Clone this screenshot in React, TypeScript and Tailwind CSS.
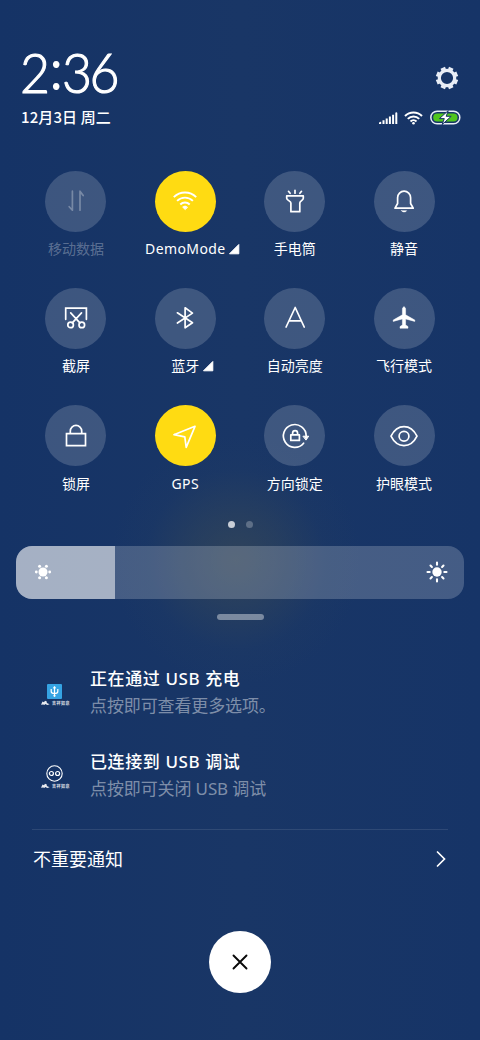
import React from 'react';

type Tile = {
  label: string;
  icon: React.ReactNode;
  active?: boolean;
  disabled?: boolean;
  expandable?: boolean;
};

const Icon = ({ children }: { children: React.ReactNode }) => (
  <svg
    width="30"
    height="30"
    viewBox="0 0 30 30"
    fill="none"
    stroke="currentColor"
    strokeWidth="1.7"
    strokeLinecap="round"
    strokeLinejoin="round"
  >
    {children}
  </svg>
);

const TILES: Tile[] = [
  {
    label: '移动数据',
    disabled: true,
    icon: (
      <Icon>
        <path d="M11.4 5.2v19l-3.2-3.5M19 24.2v-19l3.2 4.4" />
      </Icon>
    ),
  },
  {
    label: 'DemoMode',
    active: true,
    expandable: true,
    icon: (
      <Icon>
        <g strokeWidth="1.9" strokeLinecap="butt">
          <path d="M3.8 11.2a15.8 15.8 0 0 1 22.4 0M7.1 14.9a11.2 11.2 0 0 1 15.8 0M10.3 18.5a6.7 6.7 0 0 1 9.4 0" />
        </g>
        <path d="M15 23.4l-2.4-2.3a3.4 3.4 0 0 1 4.8 0z" fill="currentColor" strokeWidth="0.8" />
      </Icon>
    ),
  },
  {
    label: '手电筒',
    icon: (
      <Icon>
        <path d="M6.7 9.9h16.6v2.4c0 2-3.5 2.7-3.5 4.8v8.6h-8.9v-8.6c0-2.1-4.2-2.8-4.2-4.8zM15 4.3v2.9M8.5 5.3l1.6 2M21.5 5.3l-1.6 2" />
      </Icon>
    ),
  },
  {
    label: '静音',
    icon: (
      <Icon>
        <path d="M6 22.2h18.2l-2.6-4.7v-5.8a6.5 6.5 0 0 0-13 0v5.8z" />
        <path d="M12.6 24.7h5c-.4.9-1.4 1.2-2.5 1.2s-2.1-.3-2.5-1.2z" fill="currentColor" strokeWidth="0.5" />
      </Icon>
    ),
  },
  {
    label: '截屏',
    icon: (
      <Icon>
        <path d="M4.7 16.3V5.2h20.7v11.1M9.7 9.8l9.2 10M20.5 9.8l-9.2 10" strokeLinejoin="miter" />
        <circle cx="9.6" cy="21.9" r="2.8" />
        <circle cx="20.8" cy="21.9" r="2.8" />
      </Icon>
    ),
  },
  {
    label: '蓝牙',
    expandable: true,
    icon: (
      <Icon>
        <path d="M7.4 9.8l15.1 10-7.4 5V4.8l7.4 5.3L7.4 20" />
      </Icon>
    ),
  },
  {
    label: '自动亮度',
    icon: (
      <Icon>
        <path d="M6.1 24L15.2 4.5 24.2 24M9 17.8h12.4" />
      </Icon>
    ),
  },
  {
    label: '飞行模式',
    icon: (
      <Icon>
        <path
          d="M15 4c1 0 1.600 1 1.600 2.200v5.600l9.200 5.300v1.300l-9.200-2.500v6l2.400 1.700v1.600h-8v-1.600l2.400-1.700v-6l-9.200 2.500v-1.300l9.200-5.300V6.200C13.400 5 14 4 15 4z"
          fill="currentColor"
          strokeWidth="0.5"
        />
      </Icon>
    ),
  },
  {
    label: '锁屏',
    icon: (
      <Icon>
        <path d="M5.5 12.7h19v12h-19zM9.3 12.5v-2.400a5.700 5.700 0 0 1 11.400 0v2.400" strokeLinejoin="miter" />
      </Icon>
    ),
  },
  {
    label: 'GPS',
    active: true,
    icon: (
      <Icon>
        <path d="M25 5.300L3.900 13.700l10.900 2.200 1.400 10.400z" />
      </Icon>
    ),
  },
  {
    label: '方向锁定',
    icon: (
      <Icon>
        <path d="M23.600 22.200a11.400 11.400 0 1 1 2.600-7.200" />
        <path d="M23.300 15.200h5.400l-2.500 3.600z" fill="currentColor" strokeWidth="1" />
        <path d="M10.800 13.900h8.600v5.500h-8.600zM12.600 13.800v-1.600a2.500 2.500 0 0 1 5 0v1.600" />
      </Icon>
    ),
  },
  {
    label: '护眼模式',
    icon: (
      <Icon>
        <path d="M2 15.200c3.100-6.200 7.500-9.500 13-9.500s9.900 3.300 13 9.500c-3.100 6.200-7.500 9.500-13 9.500S5.100 21.400 2 15.200z" />
        <circle cx="15" cy="15.200" r="4.900" />
      </Icon>
    ),
  },
];

const StatusIcons = () => (
  <div className="flex items-center">
    {/* signal */}
    <svg width="19" height="14" viewBox="0 0 19 14" className="mr-1.5 fill-white">
      <path d="M0 13v-1q0-1.300 2.200-1.300V13zM3.500 13V9.300h2V13zM6.700 13V7.500h2V13zM9.900 13V5.600h2V13zM13.100 13V3.800h2V13zM16.300 13V2.200q0-1 1-1t1 1V13z" />
    </svg>
    {/* wifi */}
    <svg width="19" height="14" viewBox="0 0 19 14" className="mr-[7px]" fill="none" stroke="#fff" strokeWidth="2">
      <path d="M1 5a12 12 0 0 1 17 0M3.800 7.900a8 8 0 0 1 11.400 0M6.500 10.500a4.300 4.300 0 0 1 6 0" />
      <circle cx="9.500" cy="12.300" r="1.300" fill="#fff" stroke="none" />
    </svg>
    {/* battery */}
    <svg width="31" height="15" viewBox="0 0 31 15" fill="none">
      <rect x="0.800" y="1.200" width="29" height="12.600" rx="6.300" stroke="#e9eef7" strokeWidth="1.500" />
      <rect x="3.200" y="3.500" width="24.300" height="8" rx="4" fill="#4fc51c" />
      <path d="M18.300 0.600L9.400 8.600h4.900l-2.200 6 9.100-8.300h-5z" fill="#fff" stroke="#163467" strokeWidth="1" />
    </svg>
  </div>
);

const GearIcon = () => (
  <svg width="24" height="24" viewBox="0 0 24 24" fill="none" stroke="#e8edf6">
    <circle cx="12" cy="12" r="7.700" strokeWidth="3.200" />
    <g strokeWidth="4.800">
      <path d="M12 .9v3M12 20.100v3M.9 12h3M20.100 12h3" transform="rotate(22.500 12 12)" />
      <path d="M12 .9v3M12 20.100v3M.9 12h3M20.100 12h3" transform="rotate(67.500 12 12)" />
    </g>
  </svg>
);

const QuickTile = ({ tile }: { tile: Tile }) => (
  <div className="flex h-[117.300px] flex-col items-center">
    <div
      className={`flex size-[61px] shrink-0 items-center justify-center rounded-full ${
        tile.active ? 'bg-[#ffdb12]' : 'bg-white/17'
      } ${tile.disabled ? 'text-white/30' : 'text-white'}`}
    >
      {tile.icon}
    </div>
    <div
      className={`relative mt-[7.500px] h-5 whitespace-nowrap text-sm leading-5 ${
        tile.disabled ? 'text-white/30' : 'text-white'
      } ${tile.active ? 'tracking-[0.400px]' : ''}`}
    >
      {tile.label}
      {tile.expandable && (
        <svg width="11" height="11" viewBox="0 0 11 11" className="absolute top-[5px] left-full ml-[3.500px] fill-white">
          <path d="M9.800.5v9.300H.5z" stroke="#fff" strokeLinejoin="round" />
        </svg>
      )}
    </div>
  </div>
);

const Stamp = () => (
  <div className="mt-px flex h-[7px] items-center">
    <svg width="11" height="6" viewBox="0 0 9 6" className="fill-white/90">
      <path d="M0 4.800L1.500 1.500 3 2.200 4 .8l1.800.8v1.500l2.800 1.200-2.300.8-2-1-1 1-1-.7z" />
    </svg>
    <span className="ml-px whitespace-nowrap font-['Liberation_Serif','Noto_Sans_CJK_SC',serif] text-[4px] font-bold leading-[7px] tracking-[0.500px] text-white/85">
      吉祥如意
    </span>
  </div>
);

type NotificationProps = { icon: React.ReactNode; title: string; text: string };

const Notification = ({ icon, title, text }: NotificationProps) => (
  <div className="flex h-[83px]">
    <div className="flex w-[50px] flex-col items-start">
      <div className="flex h-[34px] w-[29px] items-end justify-center">{icon}</div>
      <Stamp />
    </div>
    <div>
      <div className="h-[27px] text-[17px] font-medium leading-[27px] tracking-[0.600px]">{title}</div>
      <div className="h-[27px] text-[17px] leading-[27px] tracking-[-0.120px] text-white/45">{text}</div>
    </div>
  </div>
);

const App: React.FC = () => {
  const brightness = 22;

  return (
    <div className="flex h-[1040px] w-[480px] flex-col overflow-hidden bg-[#163467] bg-[radial-gradient(circle_at_236px_560px,rgba(62,76,84,0.6)_0px,rgba(58,74,86,0.4)_45px,rgba(40,64,96,0.15)_90px,transparent_125px),linear-gradient(90deg,#153366,#193666_50%,#163467)] font-['Noto_Sans','Noto_Sans_CJK_SC',sans-serif] text-white">
      <header className="flex h-[170.500px] shrink-0 justify-between pt-[45px] pr-[19px] pl-[21px]">
        <div>
          <div className="-mt-[3px] -ml-px flex h-[60px] origin-left scale-x-[0.94] font-['Lato'] text-[55px] font-light leading-[60px] tracking-[-2.500px] [-webkit-text-stroke:1.100px_white]">
            <span>2</span>
            <span className="relative -top-[4px] mr-[2px] ml-[2.500px] [-webkit-text-stroke:1.800px_white]">:</span>
            <span>36</span>
          </div>
          <div className="mt-1 h-[22px] font-['Noto_Sans_CJK_SC',sans-serif] text-[15px] font-medium leading-[22px] tracking-[0.100px]">
            12月3日 周二
          </div>
        </div>
        <div className="flex flex-col items-end pt-[21px]">
          <div className="mr-0.5">
            <GearIcon />
          </div>
          <div className="mt-5">
            <StatusIcons />
          </div>
        </div>
      </header>

      <div className="mx-[21.300px] grid shrink-0 grid-cols-4">
        {TILES.map((tile) => (
          <QuickTile key={tile.label} tile={tile} />
        ))}
      </div>

      {/* Page dots */}
      <div className="-mt-[1.400px] flex h-[24.500px] shrink-0 justify-center gap-[11px]">
        <span className="size-[7px] rounded-full bg-white/75" />
        <span className="size-[7px] rounded-full bg-white/25" />
      </div>

      {/* Brightness */}
      <div className="relative mx-4 h-[53.500px] shrink-0 overflow-hidden rounded-2xl bg-white/20">
        <div className="h-full bg-white/52" style={{ width: `${brightness}%` }} />
        <div className="absolute inset-0 flex items-center justify-between pr-4 pl-[17.500px]">
          <svg width="18" height="18" viewBox="0 0 18 18" className="fill-white">
            <circle cx="9" cy="9" r="4.500" />
            <circle cx="2.300" cy="9" r="1.400" />
            <circle cx="15.700" cy="9" r="1.400" />
            <circle cx="5.600" cy="3.200" r="1.500" />
            <circle cx="12.400" cy="3.200" r="1.500" />
            <circle cx="5.600" cy="14.800" r="1.500" />
            <circle cx="12.400" cy="14.800" r="1.500" />
          </svg>
          <svg width="22" height="22" viewBox="0 0 22 22" fill="#fff" stroke="#fff" strokeWidth="2.100" strokeLinecap="round">
            <circle cx="11" cy="11" r="4.700" stroke="none" />
            <path d="M11 1.500v2.200M11 18.300v2.200M1.500 11h2.200M18.300 11h2.200M4.500 4.500l1.400 1.400M16.100 16.100l1.400 1.400M4.500 17.500l1.400-1.400M16.100 5.900l1.400-1.400" />
          </svg>
        </div>
      </div>
      <div className="mx-auto mt-[15px] h-1.5 w-[47px] shrink-0 rounded-full bg-white/40" />

      {/* Notifications */}
      <div className="mt-[44.500px] h-[164.500px] shrink-0 pl-10">
        <Notification
          title="正在通过 USB 充电"
          text="点按即可查看更多选项。"
          icon={
            <svg width="15" height="15" viewBox="0 0 15 15" fill="none" stroke="#fff">
              <rect width="15" height="15" rx="1" fill="#35a3e3" stroke="none" />
              <path d="M7.500 3v9M4.200 5v2.500q0 2 3.300 2t3.300-2V5" strokeWidth="1.200" />
              <path d="M6 4.200L7.500 2 9 4.200z" fill="#fff" strokeWidth="0.300" />
              <circle cx="7.500" cy="11.800" r="1.100" fill="#fff" stroke="none" />
            </svg>
          }
        />
        <Notification
          title="已连接到 USB 调试"
          text="点按即可关闭 USB 调试"
          icon={
            <svg width="17" height="17" viewBox="0 0 17 17" fill="none" stroke="#fff">
              <circle cx="8.500" cy="8.500" r="7.700" strokeWidth="1.100" />
              <circle cx="5.400" cy="8.500" r="2" strokeWidth="1.200" />
              <circle cx="11.600" cy="8.500" r="2" strokeWidth="1.200" />
            </svg>
          }
        />
      </div>

      <div className="mx-8 flex h-[58.500px] shrink-0 items-center justify-between border-t border-white/10 pl-px">
        <span className="text-lg">不重要通知</span>
        <svg width="12" height="18" viewBox="0 0 12 18" fill="none" stroke="#fff" strokeWidth="1.700" strokeLinecap="round" className="mr-px">
          <path d="M2.500 2l7 7-7 7" />
        </svg>
      </div>

      <button className="mx-auto mt-[43.500px] flex size-[62px] shrink-0 items-center justify-center rounded-full bg-white">
        <svg width="16" height="16" viewBox="0 0 16 16" stroke="#080808" strokeWidth="1.900" strokeLinecap="round">
          <path d="M1.500 1.500l13 13M14.500 1.500l-13 13" />
        </svg>
      </button>
    </div>
  );
};

export default App;
